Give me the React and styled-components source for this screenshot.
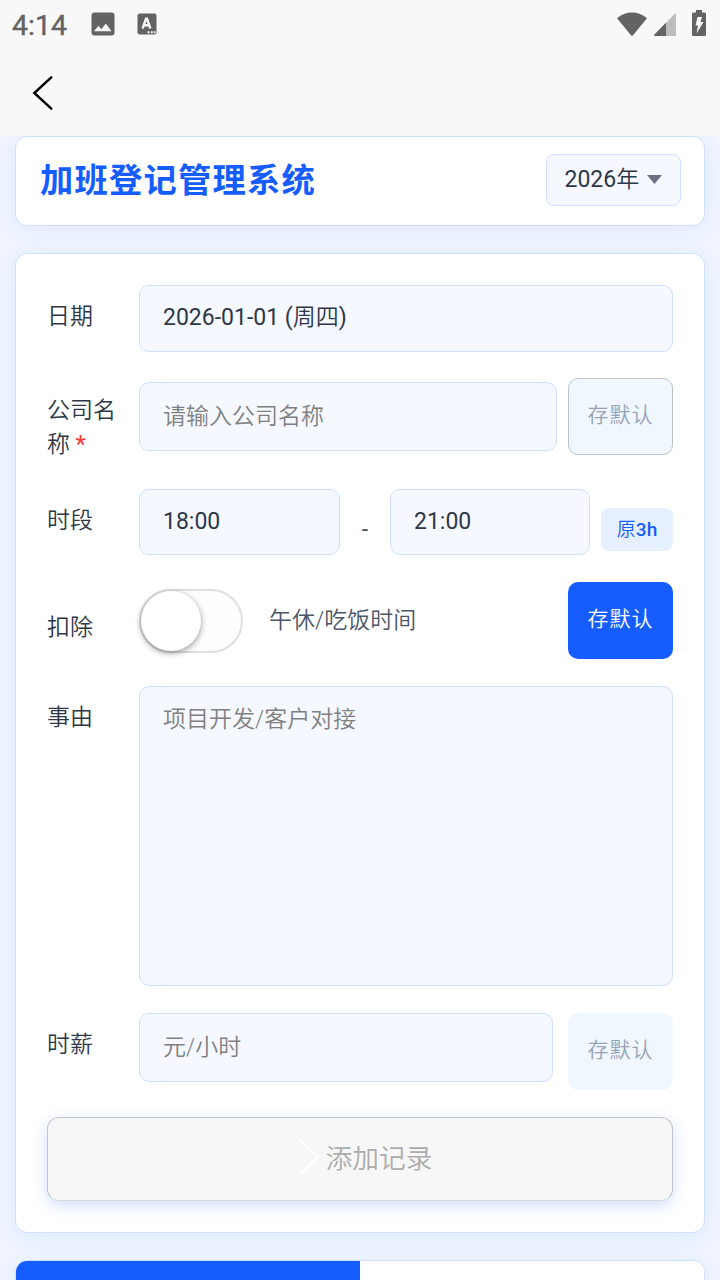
import React from "react";
import styled, { createGlobalStyle } from "styled-components";

const GlobalStyle = createGlobalStyle`
  * {
    box-sizing: border-box;
  }

  body {
    margin: 0;
    height: 1280px;
    overflow: hidden;
    background-color: #f0f5ff;
    color: #2d3748;
    font-family: Roboto, "Noto Sans CJK SC", sans-serif;
    font-size: 23px;
  }
`;

const Page = styled.div`
  width: 720px;
  height: 1280px;
  overflow: hidden;
`;

const TopBar = styled.header`
  position: relative;
  height: 136px;
  background-color: #f8f8f8;
`;

const StatusBar = styled.div`
  height: 48px;
  display: flex;
  align-items: center;
  padding: 0 14px 0 12px;
  color: #636363;
`;

const Clock = styled.span`
  width: 79px;
  font-size: 28.5px;
  line-height: 48px;
  font-weight: 400;
  padding-top: 3px;
  -webkit-text-stroke: 0.4px #636363;
`;

const StatusIcons = styled.div`
  display: flex;
  align-items: center;
  gap: ${(props) => props.$gap};
  margin-left: ${(props) => (props.$right ? "auto" : "0")};
`;

const BatterySlot = styled.div`
  display: flex;
  padding: 0 0 2px 10px;
`;

const NavBar = styled.div`
  height: 88px;
  padding: 27px 32px;
`;

const Content = styled.main`
  display: flex;
  flex-direction: column;
  gap: 27px;
  padding: 0 15px;
`;

const Card = styled.section`
  background-color: white;
  border: 1px solid #d0dfff;
  border-radius: 12px;
  box-shadow: 0 4px 23px rgba(22, 93, 255, 0.08);
`;

const Header = styled(Card)`
  height: 90px;
  display: flex;
  align-items: flex-start;
  justify-content: space-between;
  padding: 17px 23px 0 24px;
`;

const Title = styled.h1`
  margin: 0;
  padding-top: 2px;
  color: #165dff;
  font-size: 33.3px;
  font-weight: 700;
  line-height: 50px;
  letter-spacing: 1.2px;
`;

const YearPicker = styled.div`
  width: 135px;
  height: 52px;
  display: flex;
  align-items: center;
  padding: 0 17px 2px 17.5px;
  gap: 8px;
  background-color: #f5f8ff;
  border: 1px solid #d0dfff;
  border-radius: 8px;
  line-height: 33px;
  white-space: nowrap;
`;

const Light = styled.span`
  font-weight: 350;
`;

const Form = styled(Card)`
  height: 980px;
  padding: 31px;
  display: grid;
  grid-template-rows: 66px 84px 66px 77px 300px 77px 84px;
  row-gap: 27px;
`;

const Row = styled.div`
  display: flex;
  align-items: flex-start;
`;

const Label = styled.label`
  width: 92px;
  padding: ${(props) => props.$top || "15px"} 20px 0 0;
  font-weight: 350;
  line-height: ${(props) => props.$line || "33px"};
`;

const Required = styled.span`
  color: #f53f3f;
  font-weight: 500;
`;

const Picker = styled.div`
  width: ${(props) => props.$width};
  height: ${(props) => props.$height || "66px"};
  padding: 0 23px;
  background-color: #f5f8ff;
  border: 1px solid #d0dfff;
  border-radius: 10px;
  line-height: 63px;
`;

const Input = styled.input`
  width: ${(props) => props.$width};
  height: 69px;
  margin: ${(props) => props.$top || "0"} 0 0;
  padding: 0 23px;
  background-color: #f5f8ff;
  border: 1px solid #d0dfff;
  border-radius: 10px;
  font: inherit;
  font-weight: 350;

  &::placeholder {
    color: #808080;
  }
`;

const Reason = styled.textarea`
  width: 534px;
  height: 300px;
  padding: 16px 23px;
  background-color: #f5f8ff;
  border: 1px solid #d0dfff;
  border-radius: 10px;
  font: inherit;
  font-weight: 350;
  line-height: 33px;
  resize: none;

  &::placeholder {
    color: #808080;
  }
`;

const SaveButton = styled.button`
  width: 105px;
  height: 77px;
  margin-left: auto;
  padding: 0 0 8px;
  color: ${(props) => (props.$active ? "white" : "#94a3b8")};
  background-color: ${(props) => (props.$active ? "#165dff" : "#f0f7ff")};
  border: ${(props) => (props.$outlined ? "1px solid #bcc2ca" : "none")};
  border-radius: 10px;
  font: inherit;
  font-size: 21px;
  font-weight: 350;
  letter-spacing: 1px;
`;

const Dash = styled.span`
  width: 50px;
  padding-top: 24px;
  color: #4a5568;
  line-height: 33px;
  text-align: center;
`;

const Hours = styled.span`
  width: 72px;
  height: 43px;
  margin: 19px 0 0 auto;
  color: #165dff;
  background-color: #e6efff;
  border-radius: 8px;
  font-size: 19px;
  font-weight: 500;
  line-height: 43px;
  text-align: center;
`;

const HoursPrefix = styled.span`
  font-weight: 350;
`;

const Switch = styled.div`
  width: 104px;
  height: 64px;
  margin-top: 7px;
  background-color: #fdfdfd;
  border: 2px solid #dfdfdf;
  border-radius: 32px;
`;

const Knob = styled.div`
  width: 60px;
  height: 60px;
  background-color: white;
  border-radius: 50%;
  box-shadow: 0 2px 6px rgba(0, 0, 0, 0.4);
`;

const Hint = styled.span`
  padding: 22px 0 0 26px;
  color: #4a5568;
  font-weight: 350;
  line-height: 33px;
`;

const AddButton = styled.button`
  width: 626px;
  height: 84px;
  display: flex;
  align-items: center;
  justify-content: center;
  gap: 7px;
  padding: 0 0 6px 11px;
  color: #acacac;
  background-color: #f7f7f7;
  border: 1px solid #c4c4ca;
  border-bottom-color: #d9d9dd;
  border-radius: 12px;
  box-shadow: 0 4px 15px rgba(22, 93, 255, 0.2);
  font: inherit;
  font-size: 26.7px;
  font-weight: 350;

  svg {
    margin-top: 2px;
  }
`;

const Tabs = styled(Card)`
  display: flex;
  height: 90px;
  overflow: hidden;
`;

const Tab = styled.div`
  flex: 1;
  background-color: ${(props) => (props.$active ? "#165dff" : "white")};
`;

function PictureIcon() {
  return (
    <svg width="24" height="24" viewBox="0 0 24 24">
      <rect x="0.5" y="0.5" width="23" height="23" rx="3" fill="#636363" />
      <path d="M3 19.2 7.4 13.8 10.5 17.3 14.8 11.6 20.5 19.2Z" fill="#f8f8f8" />
    </svg>
  );
}

function KeyboardIcon() {
  return (
    <svg width="20" height="22" viewBox="0 0 20 22">
      <rect x="0.5" y="0.5" width="19" height="21" rx="2" fill="#636363" />
      <path
        d="M5.6 15.5 9 5.8H10L13.4 15.5M7.2 12.3H12"
        fill="none"
        stroke="#f8f8f8"
        strokeWidth="2.4"
      />
      <path d="M10.5 18.2h2v2h-2zM13.8 18.2h2v2h-2zM16.8 18.2h1.8v2h-1.8z" fill="#f8f8f8" />
    </svg>
  );
}

function WifiIcon() {
  return (
    <svg width="32" height="25" viewBox="0 0 32 25">
      <path
        d="M1 6.2C9.5-1.3 22.5-1.3 31 6.2L17 23.2Q16 24.4 15 23.2Z"
        fill="#636363"
      />
    </svg>
  );
}

function SignalIcon() {
  return (
    <svg width="22" height="23" viewBox="0 0 22 23">
      <path d="M22 1V23H1Q-.3 22.6.5 21.6L20.8.8Q21.8.2 22 1Z" fill="#bdbdbd" />
      <path d="M12 9.8V23H1Q-.3 22.6.5 21.6Z" fill="#636363" />
    </svg>
  );
}

function BatteryIcon() {
  return (
    <svg width="14" height="26" viewBox="0 0 14 26">
      <path
        d="M4 0H10V2.6H12.5Q14 2.6 14 4.2V24.4Q14 26 12.5 26H1.5Q0 26 0 24.4V4.2Q0 2.6 1.5 2.6H4Z"
        fill="#636363"
      />
      <path d="M5.5 7H10L8.5 12H11.5L4.5 23.5 6 15.5H3.5Z" fill="#f8f8f8" />
    </svg>
  );
}

export default function App() {
  return (
    <Page>
      <GlobalStyle />
      <TopBar>
        <StatusBar>
          <Clock>4:14</Clock>
          <StatusIcons $gap="22px">
            <PictureIcon />
            <KeyboardIcon />
          </StatusIcons>
          <StatusIcons $gap="6px" $right>
            <WifiIcon />
            <SignalIcon />
            <BatterySlot>
              <BatteryIcon />
            </BatterySlot>
          </StatusIcons>
        </StatusBar>
        <NavBar>
          <svg width="22" height="36" viewBox="0 0 22 36">
            <path d="M19.3 2.3 2.3 18 19.3 33.7" fill="none" stroke="black" strokeWidth="2.4" strokeLinecap="round" />
          </svg>
        </NavBar>
      </TopBar>
      <Content>
        <Header>
          <Title>加班登记管理系统</Title>
          <YearPicker>
            <span>
              2026<Light>年</Light>
            </span>
            <svg width="15" height="9" viewBox="0 0 15 9">
              <path d="M0 0H15L7.5 9Z" fill="#6b7280" />
            </svg>
          </YearPicker>
        </Header>
        <Form>
          <Row>
            <Label>日期</Label>
            <Picker $width="534px" $height="67px">
              2026-01-01 (<Light>周四</Light>)
            </Picker>
          </Row>
          <Row>
            <Label $top="16px" $line="34px">
              公司名称 <Required>*</Required>
            </Label>
            <Input $width="418px" $top="4px" placeholder="请输入公司名称" />
            <SaveButton $outlined>存默认</SaveButton>
          </Row>
          <Row>
            <Label>时段</Label>
            <Picker $width="201px">18:00</Picker>
            <Dash>-</Dash>
            <Picker $width="200px">21:00</Picker>
            <Hours>
              <HoursPrefix>原</HoursPrefix>3h
            </Hours>
          </Row>
          <Row>
            <Label $top="29px">扣除</Label>
            <Switch>
              <Knob />
            </Switch>
            <Hint>午休/吃饭时间</Hint>
            <SaveButton $active>存默认</SaveButton>
          </Row>
          <Row>
            <Label>事由</Label>
            <Reason placeholder="项目开发/客户对接" />
          </Row>
          <Row>
            <Label>时薪</Label>
            <Input $width="414px" placeholder="元/小时" />
            <SaveButton>存默认</SaveButton>
          </Row>
          <AddButton>
            <svg width="20" height="38" viewBox="0 0 20 38">
              <path d="M1 1.5 18.5 19 1 36.5" fill="none" stroke="white" strokeWidth="2" />
            </svg>
            添加记录
          </AddButton>
        </Form>
        <Tabs>
          <Tab $active />
          <Tab />
        </Tabs>
      </Content>
    </Page>
  );
}
